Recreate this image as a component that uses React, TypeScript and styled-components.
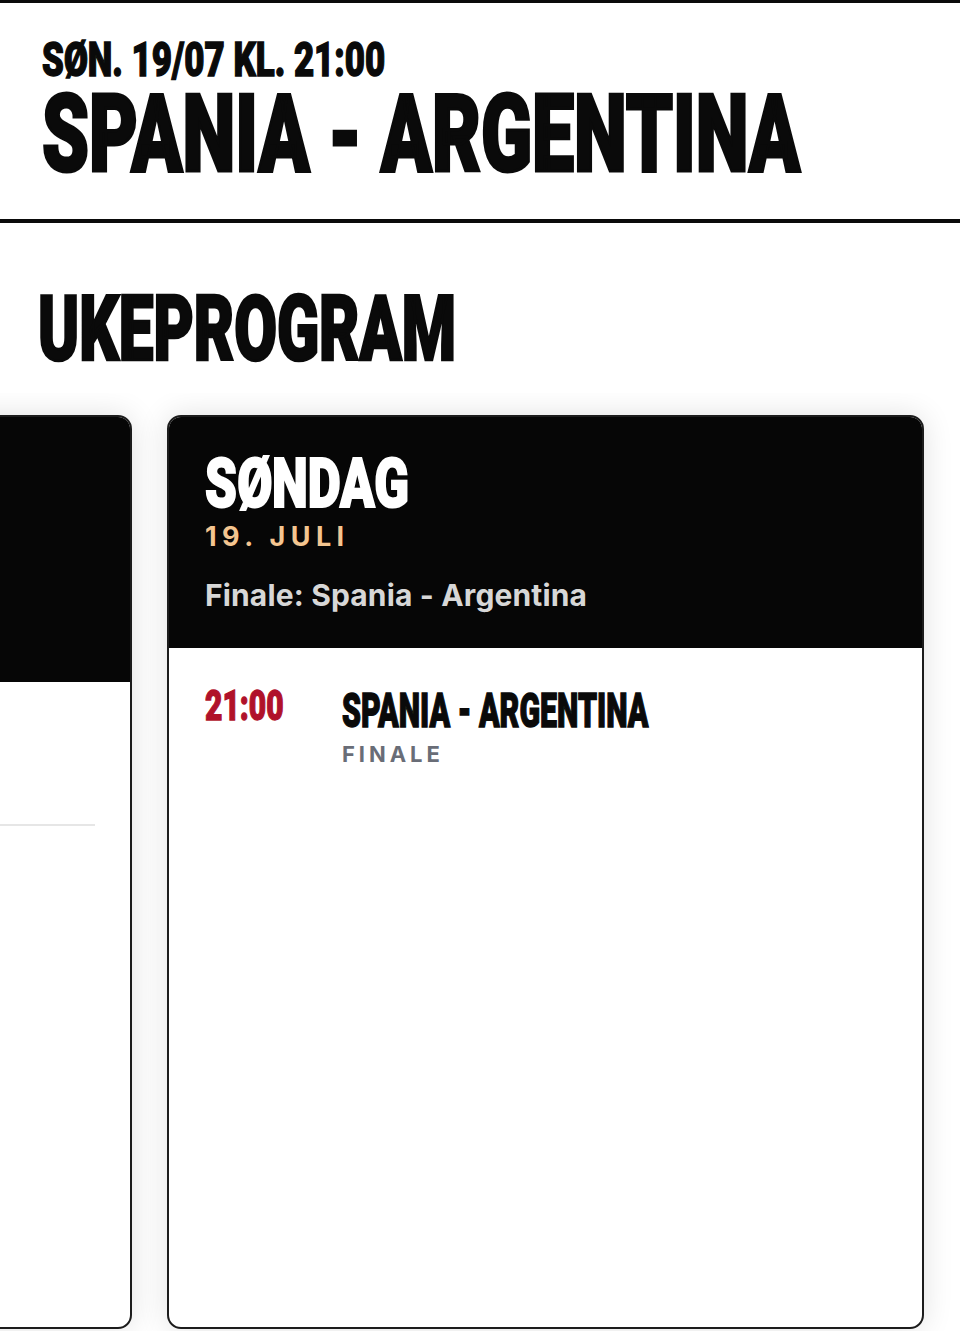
import React from 'react';
import styled, { createGlobalStyle, css } from 'styled-components';

const GlobalStyle = createGlobalStyle`
  html, body {
    margin: 0;
    padding: 0;
    background: #fff;
  }
  body {
    font-family: Inter, "Noto Sans", sans-serif;
    -webkit-font-smoothing: antialiased;
  }
  * {
    box-sizing: border-box;
  }
`;

/** Heavy condensed headline type, squeezed from Roboto Black and thickened a touch */
const condensed = (size: number, squeeze: number) => css`
  display: block;
  width: max-content;
  margin: 0;
  font-family: Roboto, "Liberation Sans", sans-serif;
  font-weight: 900;
  font-size: ${size}px;
  line-height: 0.8;
  white-space: nowrap;
  -webkit-text-stroke: 0.03em currentColor;
  transform: scaleX(${squeeze});
  transform-origin: left center;
`;

const Page = styled.div`
  width: 960px;
  min-height: 1331px;
  overflow: hidden;
  background: #fff;
`;

/* ---------- match banner ---------- */

const MatchHeader = styled.header`
  border-top: 3px solid #0a0a0a;
  border-bottom: 4px solid #0a0a0a;
  padding: 37px 42px 41px;
`;

const Kicker = styled.div`
  ${condensed(49, 0.712)};
  color: #0a0a0a;
`;

const Headline = styled.h1`
  ${condensed(108, 0.695)};
  margin-top: 12px;
  color: #0a0a0a;
`;

/* ---------- week schedule ---------- */

const WeekSection = styled.section`
  padding-top: 71px;
`;

const SectionTitle = styled.h2`
  ${condensed(90, 0.688)};
  margin-left: 38px;
  margin-bottom: 27px;
  color: #0a0a0a;
`;

const Carousel = styled.div`
  overflow: hidden;
  padding: 22px 0 2px;
`;

const Track = styled.div`
  display: flex;
  align-items: flex-start;
  gap: 35px;
  margin-left: -625px;
`;

const DayCard = styled.article`
  flex: 0 0 757px;
  height: 914px;
  border: 2px solid #1c1c1c;
  border-radius: 14px;
  overflow: hidden;
  background: #fff;
  box-shadow: 0 0 30px rgba(0, 0, 0, 0.12);
`;

const DayHead = styled.div`
  background: #060606;
  padding: 39px 36px 38px;
`;

/* the previous day, scrolled mostly out of view */
const PeekHead = styled(DayHead)`
  height: 265px;
`;

const PeekRow = styled.div`
  height: 144px;
  margin: 0 35px 0 36px;
  border-bottom: 2px solid #e6e6e6;
`;

const DayName = styled.h3`
  ${condensed(69, 0.738)};
  color: #fff;
`;

const DayDate = styled.div`
  margin-top: 12px;
  font-family: Inter, "Noto Sans", sans-serif;
  font-weight: 700;
  font-size: 27px;
  line-height: 1;
  letter-spacing: 0.2em;
  color: #f4c590;
`;

const DayNote = styled.p`
  margin: 30px 0 0;
  font-family: Inter, "Noto Sans", sans-serif;
  font-weight: 700;
  font-size: 30px;
  line-height: 1;
  letter-spacing: 0.005em;
  color: #d7d7d7;
`;

const Fixture = styled.div`
  display: grid;
  grid-template-columns: 137px 1fr;
  align-items: start;
  margin: 0 37px 0 36px;
  padding: 41px 0 28px;
`;

const KickOff = styled.div`
  ${condensed(42, 0.715)};
  color: #b0112a;
`;

const FixtureName = styled.div`
  ${condensed(48, 0.632)};
  margin-top: 3px;
  color: #0a0a0a;
`;

const Stage = styled.div`
  margin-top: 13px;
  font-family: Inter, "Noto Sans", sans-serif;
  font-weight: 700;
  font-size: 22px;
  line-height: 1;
  letter-spacing: 0.18em;
  color: #696d77;
`;

interface IMatch {
  time: string;
  teams: string;
  stage: string;
}

interface IDay {
  name: string;
  date: string;
  note: string;
  matches: IMatch[];
}

const sunday: IDay = {
  name: 'SØNDAG',
  date: '19. JULI',
  note: 'Finale: Spania - Argentina',
  matches: [{ time: '21:00', teams: 'SPANIA - ARGENTINA', stage: 'FINALE' }],
};

const DayColumn = ({ day }: { day: IDay }) => (
  <DayCard>
    <DayHead>
      <DayName>{day.name}</DayName>
      <DayDate>{day.date}</DayDate>
      <DayNote>{day.note}</DayNote>
    </DayHead>
    {day.matches.map(m => (
      <Fixture key={m.time}>
        <KickOff>{m.time}</KickOff>
        <div>
          <FixtureName>{m.teams}</FixtureName>
          <Stage>{m.stage}</Stage>
        </div>
      </Fixture>
    ))}
  </DayCard>
);

export default function App() {
  return (
    <Page>
      <GlobalStyle />
      <MatchHeader>
        <Kicker>SØN. 19/07 KL. 21:00</Kicker>
        <Headline>SPANIA - ARGENTINA</Headline>
      </MatchHeader>
      <WeekSection>
        <SectionTitle>UKEPROGRAM</SectionTitle>
        <Carousel>
          <Track>
            <DayCard aria-hidden>
              <PeekHead />
              <PeekRow />
            </DayCard>
            <DayColumn day={sunday} />
          </Track>
        </Carousel>
      </WeekSection>
    </Page>
  );
}
